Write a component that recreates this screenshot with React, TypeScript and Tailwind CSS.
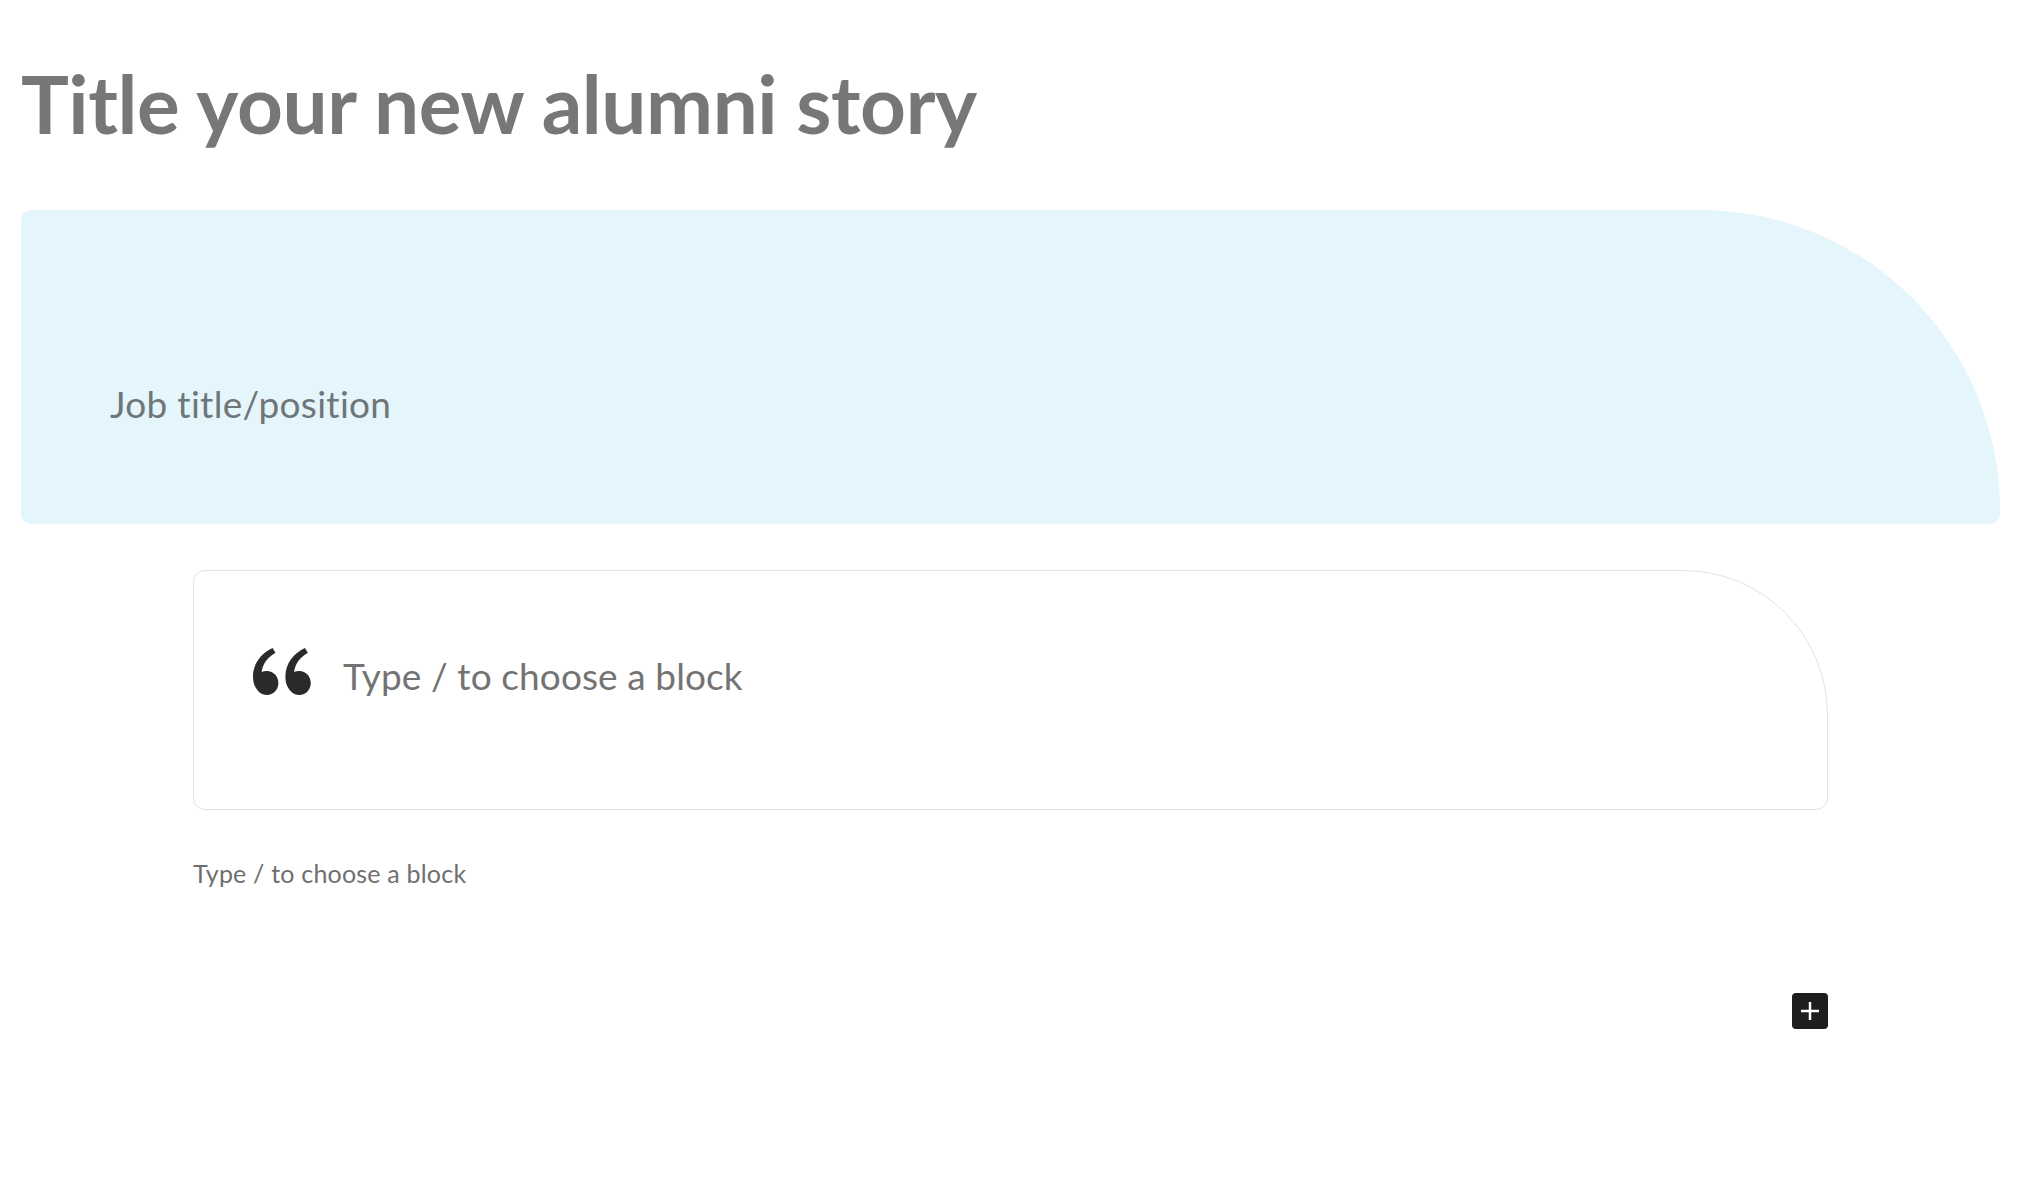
import React from "react";

export default function App() {
  return (
    <div className="min-h-screen bg-white pl-[21px] pr-[27px] pt-[63px] pb-[80px] font-['Lato','Liberation_Sans',sans-serif]">
      <h1 className="text-[80px] font-bold leading-none text-[#777777] tracking-[-0.4px]">
        Title your new alumni story
      </h1>

      <div className="mt-[67px] h-[314px] rounded-[10px] rounded-tr-[300px] bg-[#e4f6fb] pl-[89px] pt-[172px]">
        <div className="text-[37px] leading-[44px] tracking-[0.3px] text-[#6f767a]">Job title/position</div>
      </div>

      <div className="px-[172px]">
        <div className="mt-[46px] flex h-[240px] items-start rounded-[12px] rounded-tr-[145px] border border-[#e2e2e2] bg-white pl-[59px] pt-[76px]">
          <svg
            width="58"
            height="47"
            viewBox="3 4.8 17.9 13.7"
            preserveAspectRatio="none"
            className="mt-[1px] shrink-0 fill-[#2a2a2a]"
          >
            <path d="M4.58341 17.3211C3.55316 16.2274 3 15 3 13.0103C3 9.51086 5.45651 6.37366 9.03059 4.82318L9.92328 6.20079C6.58804 8.00539 5.93618 10.346 5.67564 11.8216C6.21263 11.5402 6.91558 11.4414 7.60471 11.5048C9.40908 11.6722 10.8312 13.1536 10.8312 15C10.8312 16.933 9.26416 18.5 7.33116 18.5C6.2581 18.5 5.23196 18.0095 4.58341 17.3211ZM14.5834 17.3211C13.5532 16.2274 13 15 13 13.0103C13 9.51086 15.4565 6.37366 19.0306 4.82318L19.9233 6.20079C16.588 8.00539 15.9362 10.346 15.6756 11.8216C16.2126 11.5402 16.9156 11.4414 17.6047 11.5048C19.4091 11.6722 20.8312 13.1536 20.8312 15C20.8312 16.933 19.2642 18.5 17.3312 18.5C16.2581 18.5 15.232 18.0095 14.5834 17.3211Z" />
          </svg>
          <div className="ml-[32px] mt-[6px] text-[37px] leading-[46px] tracking-[0.1px] text-[#737373]">Type / to choose a block</div>
        </div>

        <div className="mt-[47px] text-[25px] leading-[32px] tracking-[0.2px] text-[#6f6f6f]">Type / to choose a block</div>

        <div className="mt-[104px] flex justify-end">
          <button className="flex h-9 w-9 items-center justify-center rounded-[4px] bg-[#1e1e1e]">
            <svg width="18" height="18" viewBox="0 0 18 18" className="stroke-white" strokeWidth="2.5">
              <path d="M9 0V18M0 9H18" />
            </svg>
          </button>
        </div>
      </div>
    </div>
  );
}
